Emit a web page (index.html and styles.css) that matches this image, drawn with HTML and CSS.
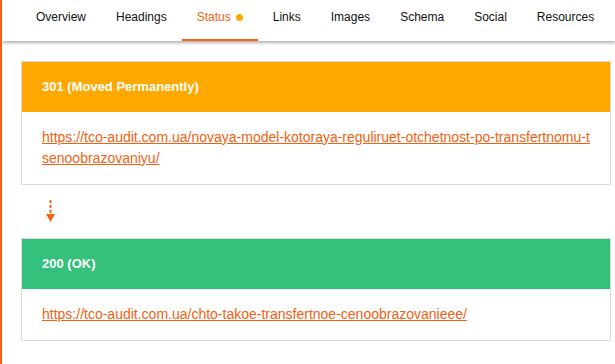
FILE: index.html
```html
<!DOCTYPE html>
<html lang="en">
<head>
    <meta charset="UTF-8">
    <title>Status</title>
    <link rel="stylesheet" href="styles.css">
</head>
<body>
    <!-- Pestañas -->
    <nav class="tabs">
        <a class="tab" href="#">Overview</a>
        <a class="tab" href="#">Headings</a>
        <a class="tab tab-active" href="#">Status<span class="tab-dot"></span></a>
        <a class="tab" href="#">Links</a>
        <a class="tab" href="#">Images</a>
        <a class="tab" href="#">Schema</a>
        <a class="tab" href="#">Social</a>
        <a class="tab" href="#">Resources</a>
    </nav>

    <div class="content">
        <!-- Redireccion -->
        <div class="card">
            <div class="card-head head-redirect">301 (Moved Permanently)</div>
            <div class="card-body">
                <a class="card-link" href="#">https://tco-audit.com.ua/novaya-model-kotoraya-reguliruet-otchetnost-po-transfertnomu-tsenoobrazovaniyu/</a>
            </div>
        </div>

        <div class="arrow">
            <svg width="9" height="22" viewBox="0 0 9 22">
                <line x1="4.5" y1="0" x2="4.5" y2="15" stroke="#f5600f" stroke-width="2" stroke-dasharray="3 2"></line>
                <polygon points="0,14 9,14 4.5,22" fill="#f5600f"></polygon>
            </svg>
        </div>

        <!-- Destino final -->
        <div class="card">
            <div class="card-head head-ok">200 (OK)</div>
            <div class="card-body">
                <a class="card-link" href="#">https://tco-audit.com.ua/chto-takoe-transfertnoe-cenoobrazovanieee/</a>
            </div>
        </div>
    </div>
</body>
</html>
```
FILE: styles.css
```css
body {
    margin: 0;
    min-height: 100vh;
    box-sizing: border-box;
    border-left: 2px solid #f5600f;
    background-color: white;
    font-family: "Liberation Sans", Arial, sans-serif;
  }
  /*Barra de pestañas*/
  .tabs {
    display: flex;
    height: 41px;
    padding-left: 19px;
    background-color: white;
    box-shadow: 0px 2px 3px rgba(0, 0, 0, 0.3);
  }
  .tab {
    display: flex;
    align-items: flex-start;
    box-sizing: border-box;
    height: 41px;
    padding: 10px 15px 0;
    font-size: 12px;
    line-height: 14px;
    color: #111;
    text-decoration: none;
    border-bottom: 2px solid transparent;
  }
  .tab-active {
    color: #f5600f;
    border-bottom-color: #f5600f;
  }
  .tab-dot {
    width: 7px;
    height: 7px;
    margin: 4px 0 0 5px;
    border-radius: 50%;
    background-color: #ffa800;
  }
  /*Contenido*/
  .content {
    padding: 20px 4px 0 19px;
  }
  .card {
    border: 1px solid #dedad4;
  }
  .card-head {
    padding: 16px 20px;
    font-size: 13px;
    font-weight: bold;
    line-height: 18px;
    color: white;
  }
  .head-redirect {
    background-color: #ffa800;
  }
  .head-ok {
    background-color: #33c17c;
  }
  .card-body {
    padding: 15px 20px;
    font-size: 14px;
    line-height: 21px;
    word-break: break-all;
  }
  .card-link {
    color: #f5600f;
  }
  .arrow {
    display: flex;
    padding: 15px 0 16px 25px;
  }
```
